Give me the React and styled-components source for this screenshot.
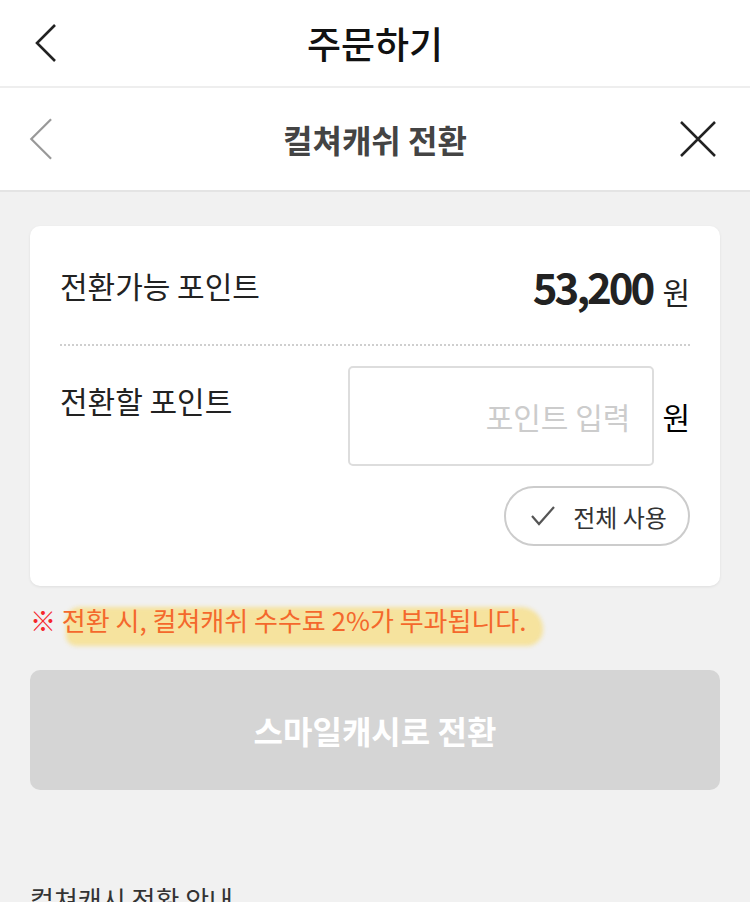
import React from "react";
import styled, { createGlobalStyle } from "styled-components";

const GlobalStyle = createGlobalStyle`
  html, body {
    margin: 0;
    padding: 0;
    background: #f1f1f1;
    font-family: "Noto Sans CJK KR", "Noto Sans", sans-serif;
  }
  * { box-sizing: border-box; }
`;

const Page = styled.div`
  width: 750px;
  height: 902px;
  overflow: hidden;
  background: #f1f1f1;
`;

const TopBar = styled.header`
  height: 88px;
  background: #fff;
  display: flex;
  align-items: center;
  justify-content: center;
  position: relative;
  border-bottom: 2px solid #eeeeee;
`;

const TopTitle = styled.h1`
  margin: 0;
  font-size: 37px;
  font-weight: 500;
  letter-spacing: 0;
  color: #111;
`;

const IconButton = styled.button`
  position: absolute;
  top: 50%;
  transform: translateY(-50%);
  ${(p) => (p.$right ? `right: ${p.$right}px;` : `left: ${p.$left}px;`)}
  border: 0;
  background: none;
  padding: 0;
  display: flex;
`;

const SubBar = styled.div`
  height: 104px;
  background: #fff;
  display: flex;
  align-items: center;
  justify-content: center;
  position: relative;
  border-bottom: 2px solid #e4e4e4;
`;

const SubTitle = styled.h2`
  margin: 0;
  font-size: 32px;
  font-weight: 700;
  letter-spacing: 0;
  color: #444;
`;

const Content = styled.main`
  padding: 34px 30px 0;
`;

const Card = styled.section`
  background: #fff;
  border-radius: 10px;
  box-shadow: 0 1px 3px rgba(0, 0, 0, 0.08);
  padding: 0 30px 40px;
`;

const Row = styled.div`
  display: flex;
  align-items: center;
  justify-content: space-between;
  height: 120px;
  border-bottom: 2px dotted #cfcfcf;
`;

const Label = styled.span`
  font-size: 30px;
  letter-spacing: 0;
  color: #222;
`;

const Amount = styled.span`
  display: flex;
  align-items: baseline;
  gap: 10px;
  color: #222;
`;

const Number = styled.strong`
  font-size: 42px;
  font-weight: 700;
  letter-spacing: -3px;
`;

const Unit = styled.span`
  font-size: 30px;
  letter-spacing: 0;
`;

const InputRow = styled.div`
  display: flex;
  justify-content: space-between;
  padding-top: 20px;
`;

const InputLabel = styled(Label)`
  padding-top: 12px;
`;

const InputGroup = styled.div`
  display: flex;
  align-items: center;
  gap: 8px;
`;

const PointInput = styled.input`
  width: 306px;
  height: 100px;
  border: 2px solid #dddddd;
  border-radius: 5px;
  padding: 0 22px;
  text-align: right;
  font-family: inherit;
  font-size: 30px;
  color: #222;
  outline: none;
  &::placeholder { color: #cccccc; }
`;

const ActionRow = styled.div`
  display: flex;
  justify-content: flex-end;
  padding-top: 20px;
`;

const Pill = styled.button`
  height: 60px;
  width: 186px;
  border: 2px solid #cccccc;
  border-radius: 30px;
  background: #fff;
  display: flex;
  align-items: center;
  justify-content: center;
  gap: 18px;
  font-family: inherit;
  font-size: 24px;
  color: #333;
  padding: 0 0 0 4px;
`;

const NoticeWrap = styled.div`
  position: relative;
  z-index: 0;
`;

const Notice = styled.p`
  margin: 14px 0 0;
  font-size: 26px;
  letter-spacing: 0;
  color: #f4682c;
  line-height: 40px;
`;

const Mark = styled.span`
  color: #f5262a;
`;

const Highlight = styled.span`
  position: relative;
  z-index: 0;
  &::before {
    content: "";
    position: absolute;
    left: 4px;
    right: -16px;
    top: 6px;
    bottom: -8px;
    background: rgba(250, 215, 90, 0.55);
    border-radius: 14px 22px 16px 10px;
    filter: blur(2px);
    z-index: -1;
  }
`;

const Submit = styled.button`
  margin-top: 30px;
  width: 100%;
  height: 120px;
  border: 0;
  border-radius: 10px;
  background: #d5d5d5;
  color: #fff;
  font-family: inherit;
  font-size: 32px;
  font-weight: 700;
`;

const Guide = styled.h3`
  margin: 90px 0 0;
  font-size: 26px;
  font-weight: 400;
  color: #333;
`;

const Chevron = ({ color, size = 44, width = 2.5 }) => (
  <svg width={size * 0.6} height={size} viewBox="0 0 24 40" fill="none">
    <path d="M21 2 L3 20 L21 38" stroke={color} strokeWidth={width} />
  </svg>
);

const Close = () => (
  <svg width="38" height="38" viewBox="0 0 38 38" fill="none">
    <path d="M2 2 L36 36 M36 2 L2 36" stroke="#222" strokeWidth="2.5" />
  </svg>
);

const Check = () => (
  <svg width="24" height="20" viewBox="0 0 24 20" fill="none">
    <path d="M1 10 L8 18 L23 1" stroke="#555" strokeWidth="2.2" />
  </svg>
);

export default function App() {
  return (
    <Page>
      <GlobalStyle />
      <TopBar>
        <IconButton $left={34} aria-label="뒤로">
          <Chevron color="#222" size={40} width={2.6} />
        </IconButton>
        <TopTitle>주문하기</TopTitle>
      </TopBar>
      <SubBar>
        <IconButton $left={28} aria-label="이전">
          <Chevron color="#999" size={44} width={2} />
        </IconButton>
        <SubTitle>컬쳐캐쉬 전환</SubTitle>
        <IconButton $right={33} aria-label="닫기">
          <Close />
        </IconButton>
      </SubBar>
      <Content>
        <Card>
          <Row>
            <Label>전환가능 포인트</Label>
            <Amount>
              <Number>53,200</Number>
              <Unit>원</Unit>
            </Amount>
          </Row>
          <InputRow>
            <InputLabel>전환할 포인트</InputLabel>
            <InputGroup>
              <PointInput placeholder="포인트 입력" />
              <Unit>원</Unit>
            </InputGroup>
          </InputRow>
          <ActionRow>
            <Pill>
              <Check />
              전체 사용
            </Pill>
          </ActionRow>
        </Card>
        <NoticeWrap>
          <Notice>
            <Mark>※</Mark> <Highlight>전환 시, 컬쳐캐쉬 수수료 2%가 부과됩니다.</Highlight>
          </Notice>
        </NoticeWrap>
        <Submit disabled>스마일캐시로 전환</Submit>
        <Guide>컬쳐캐시 전환 안내</Guide>
      </Content>
    </Page>
  );
}
